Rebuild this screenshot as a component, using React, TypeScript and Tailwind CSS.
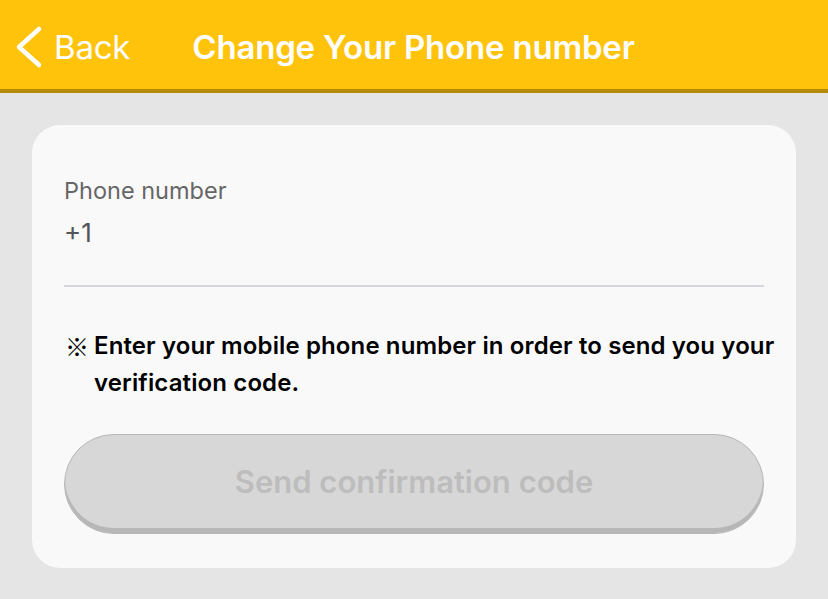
import { useState } from 'react';

function Header() {
  return (
    <div className="flex h-[93px] items-center border-b-4 border-[#b78a06] bg-[#ffc30b] pt-[5px]">
      <button className="flex items-center pl-[15px] text-white">
        <svg width="30" height="44" viewBox="0 0 30 44" className="mr-[9px]">
          <path
            d="M24 4 L4 22 L24 40"
            fill="none"
            stroke="white"
            strokeWidth="4.5"
            strokeLinecap="round"
            strokeLinejoin="round"
          />
        </svg>
        <span className="text-[33px] leading-none tracking-[-0.2px]">Back</span>
      </button>
      <h1 className="ml-[62px] text-[33px] font-semibold leading-none tracking-[-0.2px] text-white">
        Change Your Phone number
      </h1>
    </div>
  );
}

function App() {
  const [phone, setPhone] = useState('');

  return (
    <div
      className="min-h-[599px] w-full bg-[#e5e5e5]"
      style={{ fontFamily: 'Inter, "Noto Sans", sans-serif' }}
    >
      <Header />
      <div className="px-[32px] pt-[32px]">
        <div className="rounded-[28px] bg-[#f9f9f9] px-[32px] pb-[34px] pt-[52px]">
          <label className="block text-[23.5px] leading-[28px] text-[#666666]">
            Phone number
          </label>
          <div className="mt-[13px] flex h-[69px] items-start border-b-2 border-[#d6d5db]">
            <span className="text-[26px] leading-[30px] text-[#555555]">+1</span>
            <input
              value={phone}
              onChange={(e) => setPhone(e.target.value)}
              className="ml-2 h-[30px] flex-1 bg-transparent text-[26px] leading-[30px] outline-none"
            />
          </div>
          <div className="-mr-[28px] mt-[40px] flex text-[24px] font-semibold leading-[37px] tracking-[0.12px] text-black">
            <span
              className="w-[30px] shrink-0 pl-[1px] font-normal"
              style={{ fontFamily: '"Noto Sans CJK JP", sans-serif' }}
            >
              ※
            </span>
            <p>
              Enter your mobile phone number in order to send you your verification code.
            </p>
          </div>
          <button
            disabled
            className="mt-[33px] h-[100px] w-full rounded-full border border-[#b7b7b7] bg-[#d7d7d7] pb-[3px] text-[31px] font-semibold text-[#bdbdbd] shadow-[inset_0_-5px_0_#b7b7b7]"
          >
            Send confirmation code
          </button>
        </div>
      </div>
    </div>
  );
}

export default App;
